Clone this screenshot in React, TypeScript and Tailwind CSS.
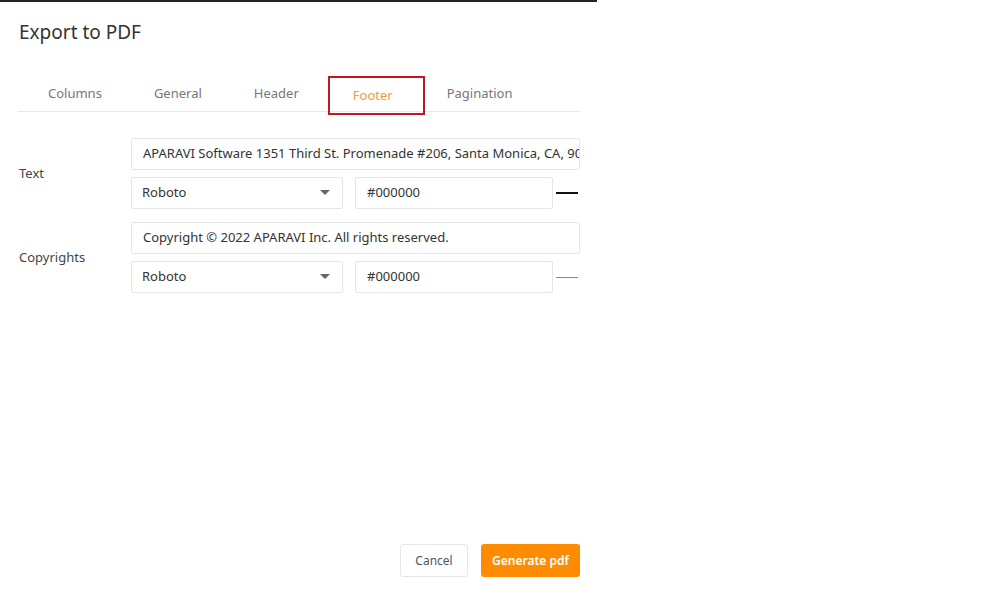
import { useState } from "react";

const tabs = ["Columns", "General", "Header", "Footer", "Pagination"];

function FontSelect({ value }: { value: string }) {
  return (
    <div className="flex items-center justify-between w-[212px] h-[32px] border border-[#e6e6e6] rounded-[2px] pl-[10px] pr-[12px] text-[13px] text-[#333]">
      <span>{value}</span>
      <svg width="10" height="6" viewBox="0 0 10 6"><path d="M0 0h10L5 5z" fill="#666" /></svg>
    </div>
  );
}

function ColorRow({ color, dark }: { color: string; dark: boolean }) {
  return (
    <div className="flex items-center gap-[12px]">
      <FontSelect value="Roboto" />
      <div className="flex items-center w-[198px] h-[32px] border border-[#e6e6e6] rounded-[2px] pl-[11px] text-[13px] text-[#333]">
        {color}
      </div>
      <div className={dark ? "w-[22px] h-[2px] bg-[#111] -ml-[9px]" : "w-[22px] h-[1px] bg-[#888] -ml-[9px]"} />
    </div>
  );
}

export default function App() {
  const [active, setActive] = useState("Footer");

  return (
    <div className="w-[1008px] h-[589px] bg-white" style={{ fontFamily: "'Noto Sans', 'Open Sans', sans-serif" }}>
      <div className="w-[597px] h-[589px] border-t-[2px] border-[#222] flex flex-col pl-[18px] pr-[17px]">
        <h1 className="text-[19px] text-[#333] mt-[17px] ml-[1px] leading-[26px]">Export to PDF</h1>

        <div className="flex mt-[30px] border-b border-[#e8e8e8] h-[37px] pl-[4px]">
          {tabs.map(t => (
            <button
              key={t}
              onClick={() => setActive(t)}
              className={
                t === active
                  ? "h-[39px] mt-[1px] ml-[3px] pl-[23px] pr-[30px] text-[13px] text-[#f39a3c] border-2 border-[#c4161c]"
                  : t === "Pagination"
                  ? "h-[37px] pl-[22px] pr-[26px] text-[13px] text-[#777]"
                  : "h-[37px] px-[26px] text-[13px] text-[#777]"
              }
            >
              {t}
            </button>
          ))}
        </div>

        <div className="flex mt-[26px]">
          <div className="w-[113px] flex items-center text-[13px] text-[#444] pl-[1px]">Text</div>
          <div className="flex flex-col gap-[7px] w-[449px] overflow-hidden">
            <div className="flex items-center h-[32px] border border-[#e6e6e6] rounded-[2px] pl-[11px] text-[13px] text-[#333] whitespace-nowrap overflow-hidden">
              APARAVI Software 1351 Third St. Promenade #206, Santa Monica, CA, 90401
            </div>
            <ColorRow color="#000000" dark />
          </div>
        </div>

        <div className="flex mt-[13px]">
          <div className="w-[113px] flex items-center text-[13px] text-[#444] pl-[1px]">Copyrights</div>
          <div className="flex flex-col gap-[7px] w-[449px] overflow-hidden">
            <div className="flex items-center h-[32px] border border-[#e6e6e6] rounded-[2px] pl-[11px] text-[13px] text-[#333] whitespace-nowrap overflow-hidden">
              Copyright © 2022 APARAVI Inc. All rights reserved.
            </div>
            <ColorRow color="#000000" dark={false} />
          </div>
        </div>

        <div className="flex-1" />
        <div className="flex justify-end gap-[13px] mb-[12px]">
          <button className="w-[68px] h-[33px] border border-[#e6e6e6] rounded-[3px] text-[12px] text-[#555]">Cancel</button>
          <button className="w-[99px] h-[33px] rounded-[3px] bg-[#ff8c00] text-[12px] text-white font-semibold">Generate pdf</button>
        </div>
      </div>
    </div>
  );
}
